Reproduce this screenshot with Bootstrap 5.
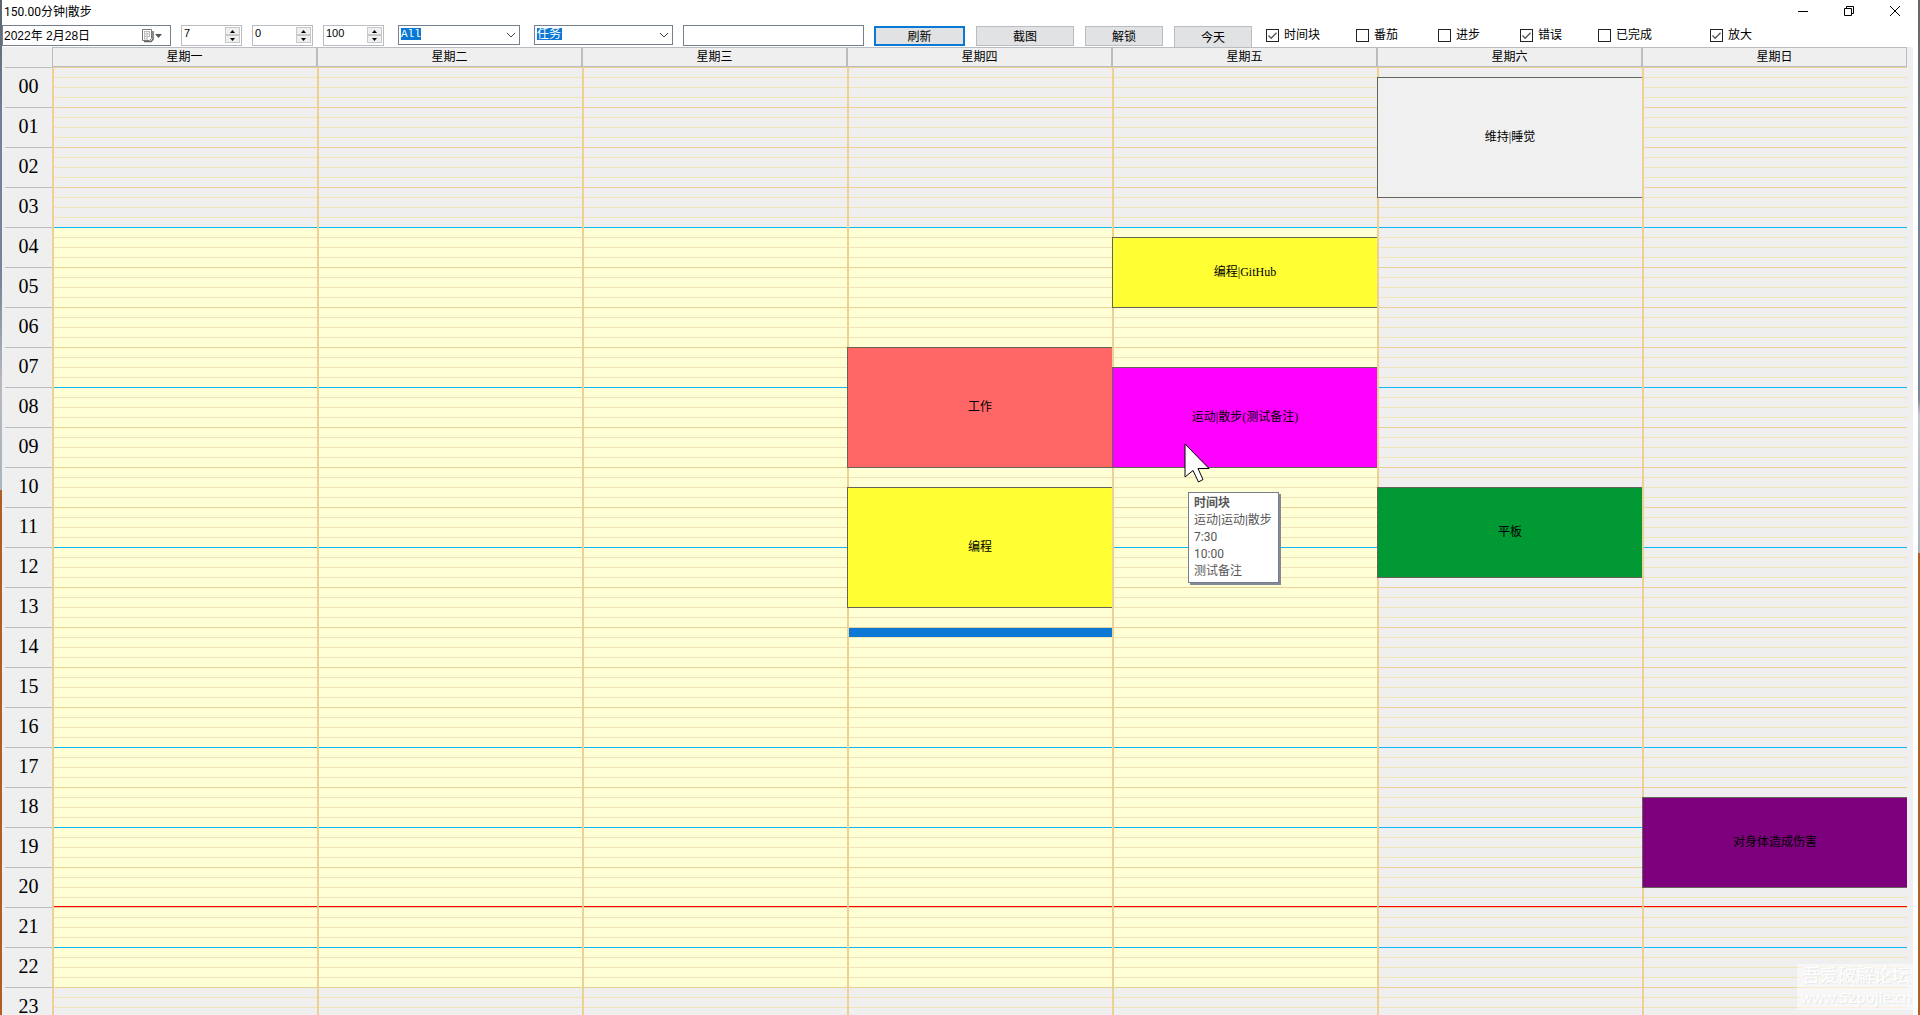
<!DOCTYPE html>
<html lang="zh-CN">
<head>
<meta charset="utf-8">
<meta name="viewport" content="width=device-width, initial-scale=1">
<title>150.00分钟|散步</title>
<link href="https://cdn.jsdelivr.net/npm/bootstrap@5.3.0/dist/css/bootstrap.min.css" rel="stylesheet">
<style>
:root{--ui:"Liberation Sans","Noto Sans CJK SC",sans-serif;--edge:#b9bcc0;--frame:#767f8d;--accent:#0a78d4;--hour:#edd096;--quarter:#f2e3b6;--cyan:#0cb8f6}
body{font-family:var(--ui);font-size:12px;line-height:16px;color:#000;
 background:linear-gradient(#5c6470 0,#71809a 120px,#76859a 280px,#b4b9bf 380px,#aab4bc 490px,#ad5f27 490px) left/2px 100% no-repeat,
 linear-gradient(#66676a 0,#6b7178 100px,#71819b 200px,#7d8999 400px,#c3c8ce 415px,#a9b2ba 553px,#ad6128 553px) right/2px 100% no-repeat}
.app-window{margin:0 2px;background:#fff}
.title-bar{height:25px;padding-left:2px;font-family:Roboto,"Noto Sans CJK SC",sans-serif}
.win-btn{width:46px;height:22px;border:0;background:none;padding:0}
.win-btn svg{display:block;margin:auto}
.tool-bar{height:22px;gap:10px}
.tool-bar button{font-size:12px;line-height:16px}
.tool-bar input,.tool-bar select{font-size:12px;line-height:16px;border-radius:0;color:#000}
.boxed{border:1px solid var(--frame);background:#fff;height:21px}
.boxed input,.spin input{border:0;background:none;padding:0;min-width:0;outline:0}
.date-box{width:169px;padding-left:1px}
.date-btn{width:29px;border:0;background:none;padding:0;flex-shrink:0}
.date-btn svg{display:block}
.spin{width:61px;height:21px;border:1px solid var(--edge);background:#fff;padding:0 1px 2px 2px}
.spin input{width:40px;height:14px;font-size:11px!important;appearance:textfield}
.spin input::-webkit-inner-spin-button{display:none}
.spin-btns{width:15px;flex-shrink:0;padding-top:1px}
.spin-btns button{flex:1;border:1px solid #c6c8ca;background:#efefef;padding:0;line-height:0}
.spin-btns svg{display:block;margin:auto}
.combo-box{height:20px}
.combo-box select{width:100%;height:20px;appearance:none;border:1px solid var(--frame);padding:0 0 2px 2px;line-height:14px!important;color:#fff!important;background:linear-gradient(var(--accent),var(--accent)) 2px 2px/var(--sel) 12px no-repeat #fff}
.combo-box option{color:#000}
.combo-box svg{position:absolute;right:4px;top:7px;pointer-events:none}
.w-kind{width:122px;--sel:20px;margin-left:4px}
.w-kind select{font-family:"Liberation Mono",monospace;font-size:11px!important}
.w-task{width:139px;--sel:25px;margin-left:4px}
.w-find{width:181px;padding:0 4px}
.push-group{gap:11px}
.push{height:20px;margin-top:1px;border:1px solid var(--edge);border-radius:0;background:#e1e2e4;color:#000;padding:1px 0 0}
.push:hover{background:#e5f1fb;border-color:var(--accent)}
.push.is-default{border:2px solid var(--accent)}
.push.tall{height:22px;padding-top:2px}
.push-a{width:91px}.push-b{width:98px}.push-c{width:78px}
.ticks{margin-left:4px}
.tick{display:flex;align-items:center;gap:5px;width:82px;height:20px}
.tick.slim{width:78px}.tick.wide{width:90px}.tick.wider{width:112px}
.tick input{appearance:none;width:13px;height:13px;margin:0;border:1px solid #222;background:#fff}
.tick input:checked{background:url("data:image/svg+xml,%3Csvg xmlns='http://www.w3.org/2000/svg' viewBox='0 0 11 11'%3E%3Cpath d='M1.5 5.5l2.7 2.8L9.5 2.8' fill='none' stroke='%23555' stroke-width='1.3'/%3E%3C/svg%3E")}
.planner{margin-right:5px;padding:0 6px 0 3px;background:#efefef}
.gutter{width:47px}
.day-heads{border:1px solid var(--edge);border-width:1px 1px 1px 0;height:20px}
.day-heads div{border-left:2px solid var(--edge);text-align:center;line-height:18px}
.day-heads div:first-child{border-left-width:1px}
.gutter div{height:40px;border-top:1px solid var(--edge);font:20px/36px "Liberation Serif",serif;text-align:center}
.gutter .gap-cell{height:20px;border:0}
.week{height:960px}
.day{min-width:0;display:grid;grid-template-rows:repeat(96,10px);border-left:2px solid var(--hour);--fill:#efefef;
 background:
 linear-gradient(red,red) 0 839px/100% 1px no-repeat,
 linear-gradient(var(--cyan),var(--cyan)) 0 160px/100% 1px no-repeat,
 linear-gradient(var(--cyan),var(--cyan)) 0 320px/100% 1px no-repeat,
 linear-gradient(var(--cyan),var(--cyan)) 0 480px/100% 1px no-repeat,
 linear-gradient(var(--cyan),var(--cyan)) 0 680px/100% 1px no-repeat,
 linear-gradient(var(--cyan),var(--cyan)) 0 760px/100% 1px no-repeat,
 linear-gradient(var(--cyan),var(--cyan)) 0 880px/100% 1px no-repeat,
 repeating-linear-gradient(var(--hour) 0 1px,transparent 1px 40px),
 repeating-linear-gradient(var(--quarter) 0 1px,transparent 1px 10px),
 linear-gradient(var(--fill),var(--fill)) 0 160px/100% 760px no-repeat}
.workday{--fill:#ffffd6}
.entry{position:relative;margin:0 0 -1px -2px;padding-bottom:2px;border:1px solid #646458;border-right:0;font-family:"Liberation Serif","Noto Sans CJK SC",serif;display:flex;align-items:center;justify-content:center}
.r-sleep{grid-row:2/14;background:#f0f0f0}
.r-git{grid-row:18/25;background:#ff3}
.r-work{grid-row:29/41;background:#f66}
.r-code{grid-row:43/55;background:#ff3}
.r-now{grid-row:57/58;background:var(--accent);margin-top:1px}
.r-walk{grid-row:31/41;background:#f0f}
.r-pad{grid-row:43/52;background:#093}
.r-harm{grid-row:74/83;background:#7d007d}
.pointer{position:absolute;left:70px;top:74px;z-index:3}
.tip{position:absolute;left:75px;top:124px;z-index:2;width:91px;height:91px;background:#fff;border:1px solid var(--frame);box-shadow:2px 2px 0 #858996;padding:2px 5px;font:12px/17px Roboto,"Noto Sans CJK SC",sans-serif;color:#575757;white-space:nowrap}
.forum{position:absolute;right:5px;bottom:5px;width:118px;height:46px;background:rgba(255,255,255,.5);color:#fff;font-family:"Noto Sans","Noto Sans CJK SC",sans-serif;text-shadow:1px 1px 0 #e6e6e6;text-align:center;font-size:18px;line-height:22px}
.forum small{display:block;font-size:15px}
</style>
<script src="https://cdn.jsdelivr.net/npm/bootstrap@5.3.0/dist/js/bootstrap.bundle.min.js"></script>
</head>
<body class="vh-100 overflow-hidden position-relative">
<div class="app-window vh-100 overflow-hidden d-flex flex-column">
 <header class="title-bar d-flex justify-content-between flex-shrink-0">
  <span class="pt-1">150.00分钟|散步</span>
  <div class="d-flex">
   <button class="win-btn" type="button" aria-label="最小化"><svg width="12" height="12"><path d="M1 6.500h10" stroke="#000"/></svg></button>
   <button class="win-btn" type="button" aria-label="还原"><svg width="12" height="12"><path d="M1.500 3.500h7v7h-7zM3.500 3V1.500h7v7H9" fill="none" stroke="#000"/></svg></button>
   <button class="win-btn" type="button" aria-label="关闭"><svg width="12" height="12"><path d="M1 1l10 10M11 1L1 11" stroke="#000"/></svg></button>
  </div>
 </header>
 <form class="tool-bar d-flex flex-shrink-0" onsubmit="return false">
  <div class="boxed date-box d-flex">
   <input class="flex-fill" type="text" value="2022年 2月28日" aria-label="日期">
   <button class="date-btn" type="button" aria-label="日历"><svg width="22" height="17" viewBox="0 0 22 17"><path d="M3 14.500h7l2-2V4" fill="none" stroke="#666" stroke-width="1.500"/><path d="M1.500 2.500h9v9l-2 2h-7z" fill="#fff" stroke="#777"/><path d="M3 4.500h6M3 7h6M3 9.500h6M3 12h4M3.500 4v8M6 4v8M8.500 4v6" stroke="#bbb"/><path d="M14 7h7l-3.500 4z" fill="#555"/></svg></button>
  </div>
  <div class="spin d-flex"><input class="flex-fill" type="number" value="7" aria-label="天数"><div class="spin-btns d-flex flex-column"><button type="button" aria-label="增加"><svg width="5" height="3"><path d="M0 3h5L2.500 0z"/></svg></button><button type="button" aria-label="减少"><svg width="5" height="3"><path d="M0 0h5L2.500 3z"/></svg></button></div></div>
  <div class="spin d-flex"><input class="flex-fill" type="number" value="0" aria-label="偏移"><div class="spin-btns d-flex flex-column"><button type="button" aria-label="增加"><svg width="5" height="3"><path d="M0 3h5L2.500 0z"/></svg></button><button type="button" aria-label="减少"><svg width="5" height="3"><path d="M0 0h5L2.500 3z"/></svg></button></div></div>
  <div class="spin d-flex"><input class="flex-fill" type="number" value="100" aria-label="缩放"><div class="spin-btns d-flex flex-column"><button type="button" aria-label="增加"><svg width="5" height="3"><path d="M0 3h5L2.500 0z"/></svg></button><button type="button" aria-label="减少"><svg width="5" height="3"><path d="M0 0h5L2.500 3z"/></svg></button></div></div>
  <div class="combo-box w-kind position-relative"><select aria-label="范围"><option>All</option></select><svg width="10" height="6"><path d="M1 1l4 4 4-4" fill="none" stroke="#444"/></svg></div>
  <div class="combo-box w-task position-relative"><select aria-label="类型"><option>任务</option></select><svg width="10" height="6"><path d="M1 1l4 4 4-4" fill="none" stroke="#444"/></svg></div>
  <input class="boxed w-find" type="text" aria-label="搜索">
  <div class="push-group d-flex align-items-start">
   <button class="push push-a is-default" type="submit">刷新</button>
   <button class="push push-b" type="button">截图</button>
   <button class="push push-c" type="button">解锁</button>
   <button class="push push-c tall" type="button">今天</button>
  </div>
  <div class="ticks d-flex">
   <label class="tick wide"><input type="checkbox" checked>时间块</label>
   <label class="tick"><input type="checkbox">番茄</label>
   <label class="tick"><input type="checkbox">进步</label>
   <label class="tick slim"><input type="checkbox" checked>错误</label>
   <label class="tick wider"><input type="checkbox">已完成</label>
   <label class="tick"><input type="checkbox" checked>放大</label>
  </div>
 </form>
 <main class="planner d-flex flex-fill overflow-hidden">
  <div class="gutter flex-shrink-0">
   <div class="gap-cell"></div>
   <div>00</div><div>01</div><div>02</div><div>03</div><div>04</div><div>05</div><div>06</div><div>07</div><div>08</div><div>09</div><div>10</div><div>11</div><div>12</div><div>13</div><div>14</div><div>15</div><div>16</div><div>17</div><div>18</div><div>19</div><div>20</div><div>21</div><div>22</div><div>23</div>
  </div>
  <div class="flex-fill">
   <div class="day-heads row row-cols-7 g-0 flex-nowrap">
    <div class="col">星期一</div><div class="col">星期二</div><div class="col">星期三</div><div class="col">星期四</div><div class="col">星期五</div><div class="col">星期六</div><div class="col">星期日</div>
   </div>
   <div class="week row g-0 flex-nowrap">
    <section class="col day workday"></section>
    <section class="col day workday"></section>
    <section class="col day workday"></section>
    <section class="col day workday">
     <div class="entry r-work">工作</div>
     <div class="entry r-code">编程</div>
     <div class="r-now"></div>
    </section>
    <section class="col day workday">
     <div class="entry r-git">编程|GitHub</div>
     <div class="entry r-walk">运动|散步(测试备注)
      <svg class="pointer" width="28" height="42" viewBox="-2 -2 28 42"><path d="M0 0V33L8 26.500 13.500 38l4.500-2.500L13 24.500H24z" fill="#fff" stroke="#000"/></svg>
      <div class="tip" role="tooltip"><b>时间块</b><br>运动|运动|散步<br>7:30<br>10:00<br>测试备注</div>
     </div>
    </section>
    <section class="col day">
     <div class="entry r-sleep">维持|睡觉</div>
     <div class="entry r-pad">平板</div>
    </section>
    <section class="col day">
     <div class="entry r-harm">对身体造成伤害</div>
    </section>
   </div>
  </div>
 </main>
</div>
<aside class="forum">吾爱破解论坛<small>www.52pojie.cn</small></aside>
</body>
</html>
